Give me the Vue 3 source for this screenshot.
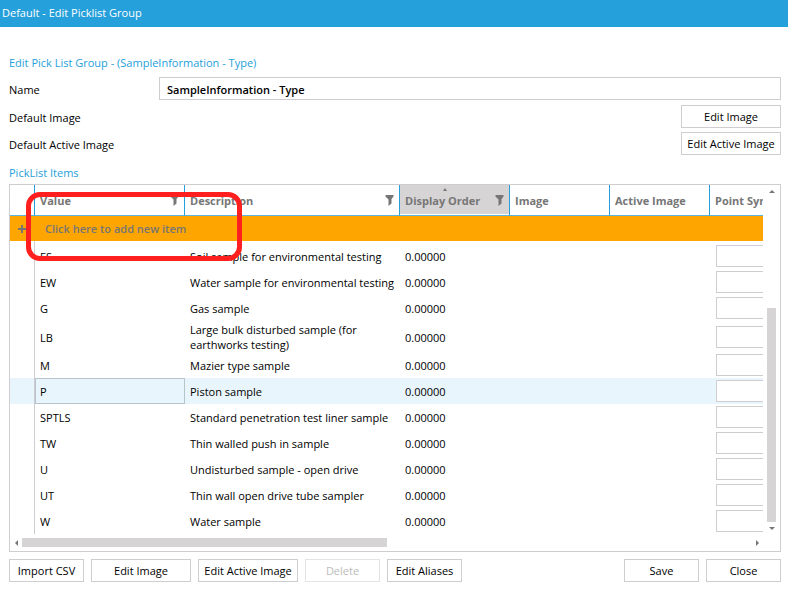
<script setup>
import { ref } from 'vue'

const name = ref('SampleInformation - Type')
const selected = ref('P')

const columns = [
  { key: 'value', label: 'Value', filter: true },
  { key: 'description', label: 'Description', filter: true },
  { key: 'order', label: 'Display Order', filter: true, sorted: true },
  { key: 'image', label: 'Image' },
  { key: 'active', label: 'Active Image' },
  { key: 'symbol', label: 'Point Symbol' },
]

const items = ref([
  { value: 'ES', description: 'Soil sample for environmental testing', order: '0.00000', symbol: '' },
  { value: 'EW', description: 'Water sample for environmental testing', order: '0.00000', symbol: '' },
  { value: 'G', description: 'Gas sample', order: '0.00000', symbol: '' },
  { value: 'LB', description: 'Large bulk disturbed sample (for earthworks testing)', order: '0.00000', symbol: '' },
  { value: 'M', description: 'Mazier type sample', order: '0.00000', symbol: '' },
  { value: 'P', description: 'Piston sample', order: '0.00000', symbol: '' },
  { value: 'SPTLS', description: 'Standard penetration test liner sample', order: '0.00000', symbol: '' },
  { value: 'TW', description: 'Thin walled push in sample', order: '0.00000', symbol: '' },
  { value: 'U', description: 'Undisturbed sample - open drive', order: '0.00000', symbol: '' },
  { value: 'UT', description: 'Thin wall open drive tube sampler', order: '0.00000', symbol: '' },
  { value: 'W', description: 'Water sample', order: '0.00000', symbol: '' },
])
</script>

<template>
  <div class="window">
    <header class="titlebar">Default - Edit Picklist Group</header>

    <main class="content">
      <h1 class="heading">Edit Pick List Group - (SampleInformation - Type)</h1>

      <div class="form">
        <div class="field">
          <label class="field-label" for="group-name">Name</label>
          <input id="group-name" v-model="name" class="name-input" type="text" />
        </div>
        <div class="field">
          <span class="field-label">Default Image</span>
          <button class="btn wide" type="button">Edit Image</button>
        </div>
        <div class="field">
          <span class="field-label">Default Active Image</span>
          <button class="btn wide" type="button">Edit Active Image</button>
        </div>
      </div>

      <h2 class="heading items-heading">PickList Items</h2>

      <section class="grid">
        <div class="viewport">
          <table class="table">
            <colgroup>
              <col class="col-marker" />
              <col class="col-value" />
              <col class="col-description" />
              <col class="col-order" />
              <col class="col-image" />
              <col class="col-image" />
              <col class="col-symbol" />
            </colgroup>
            <thead>
              <tr>
                <td class="corner"></td>
                <th v-for="c in columns" :key="c.key" scope="col" :class="{ sorted: c.sorted }">
                  <div class="head">
                    <span>{{ c.label }}</span>
                    <svg v-if="c.filter" class="funnel" viewBox="0 0 9 11" aria-hidden="true">
                      <path d="M0.500 0H8.500V1.500L6.500 4V8.500L3.500 11V4.500L0.500 1.500Z" />
                    </svg>
                  </div>
                  <svg v-if="c.sorted" class="sort" viewBox="0 0 4 3" aria-hidden="true">
                    <path d="M2 0L4 3H0Z" />
                  </svg>
                </th>
              </tr>
            </thead>
            <tbody>
              <tr class="new-row">
                <td class="plus">
                  <svg class="plus-icon" viewBox="0 0 8 8" aria-hidden="true">
                    <path d="M3 0H5V3H8V5H5V8H3V5H0V3H3Z" />
                  </svg>
                </td>
                <td colspan="6" class="new-text">Click here to add new item</td>
              </tr>
              <tr class="spacer"><td class="marker"></td><td colspan="6"></td></tr>
              <tr
                v-for="item in items"
                :key="item.value"
                class="row"
                :class="{ selected: item.value === selected }"
                @click="selected = item.value"
              >
                <td class="marker"></td>
                <td class="value">{{ item.value }}</td>
                <td>{{ item.description }}</td>
                <td>{{ item.order }}</td>
                <td></td>
                <td></td>
                <td class="symbol"><input v-model="item.symbol" class="symbol-input" type="text" :aria-label="'Point symbol for ' + item.value" /></td>
              </tr>
            </tbody>
          </table>
        </div>

        <div class="vbar">
          <svg class="arrow-v" viewBox="0 0 6 3" aria-hidden="true"><path d="M3 0L6 3H0Z" /></svg>
          <div class="vtrack"><div class="vthumb"></div></div>
          <svg class="arrow-v" viewBox="0 0 6 3" aria-hidden="true"><path d="M0 0H6L3 3Z" /></svg>
        </div>

        <div class="hbar">
          <svg class="arrow-h" viewBox="0 0 3 6" aria-hidden="true"><path d="M3 0V6L0 3Z" /></svg>
          <div class="htrack"><div class="hthumb"></div></div>
          <svg class="arrow-h" viewBox="0 0 3 6" aria-hidden="true"><path d="M0 0L3 3L0 6Z" /></svg>
        </div>

        <div class="highlight"></div>
      </section>

      <footer class="actions">
        <button class="btn" type="button">Import CSV</button>
        <button class="btn wide" type="button">Edit Image</button>
        <button class="btn wide" type="button">Edit Active Image</button>
        <button class="btn" type="button" disabled>Delete</button>
        <button class="btn" type="button">Edit Aliases</button>
        <span class="push"></span>
        <button class="btn" type="button">Save</button>
        <button class="btn" type="button">Close</button>
      </footer>
    </main>
  </div>
</template>

<style>
body {
  margin: 0;
  background: #fff;
}
</style>

<style scoped>
.window,
.window button,
.window input {
  font-family: "Open Sans", "Noto Sans", sans-serif;
  font-size: 11px;
  line-height: 15px;
  color: #000;
}
.window * {
  box-sizing: border-box;
}
.window .titlebar {
  height: 27px;
  padding: 5px 2px;
  background: #26a0da;
  color: #fff;
}
.content {
  padding: 28px 7px 10px 9px;
}
.heading {
  margin: 0;
  font-size: 11px;
  font-weight: 400;
  line-height: 15px;
  color: #26a0da;
}
.form {
  display: flex;
  flex-direction: column;
  gap: 4px;
  margin-top: 7px;
}
.field {
  display: flex;
  justify-content: space-between;
  align-items: center;
}
.field-label {
  flex: 0 0 150px;
  padding-top: 2px;
}
.name-input {
  flex: 1;
  min-width: 0;
  height: 23px;
  padding: 2px 7px 0;
  border: 1px solid #cfcdcf;
  font-weight: 600;
  outline: none;
}
.form .field:first-child {
  margin-bottom: 1px;
}
.btn {
  flex: none;
  width: 75px;
  height: 23px;
  padding: 0;
  border: 1px solid #cfcdcf;
  background: #fff;
  white-space: nowrap;
}
.btn.wide {
  width: 100px;
}
.window .btn:disabled {
  color: #bbb;
  border-color: #e4e4e4;
}
.items-heading {
  margin-top: 10px;
}
.grid {
  position: relative;
  display: grid;
  grid-template-columns: minmax(0, 1fr) 17px;
  grid-template-rows: auto 17px;
  margin-top: 4px;
  border: 1px solid #cfcdcf;
}
.viewport {
  overflow: hidden;
}
.table {
  width: 850px;
  table-layout: fixed;
  border-collapse: separate;
  border-spacing: 0;
}
.col-marker { width: 25px; }
.col-value { width: 150px; }
.col-description { width: 215px; }
.col-order { width: 110px; }
.col-image { width: 100px; }
.col-symbol { width: 150px; }
td,
th {
  padding: 0 5px;
  text-align: left;
  vertical-align: middle;
}
th,
.corner {
  position: relative;
  height: 31px;
  border-right: 1px solid #26a0da;
  border-bottom: 1px solid #5cb3dc;
  color: #767676;
  font-weight: 700;
  white-space: nowrap;
}
th.sorted {
  background: #d6d4d5;
  box-shadow: inset 0 -1px #fff;
}
.head {
  display: flex;
  justify-content: space-between;
  align-items: center;
}
.funnel {
  width: 9px;
  height: 11px;
  fill: #767676;
}
.sort {
  position: absolute;
  top: 3px;
  left: 43px;
  width: 4px;
  height: 3px;
  fill: #767676;
}
.new-row td {
  height: 25px;
  background: #ffa500;
  color: #767676;
  font-weight: 600;
}
.new-row .new-text {
  padding-left: 10px;
}
.new-row .plus {
  padding: 0 0 0 8px;
}
.plus-icon {
  display: block;
  width: 8px;
  height: 8px;
  fill: #767676;
}
.spacer td {
  height: 2px;
}
.row td {
  height: 26px;
  padding-top: 1px;
}
.row .symbol {
  padding-top: 0;
}
.marker {
  border-right: 1px solid #cfcdcf;
}
.selected td {
  background: #e9f5fc;
}
.row.selected .value {
  border: 1px solid #b9c4ca;
  padding: 1px 4px 0;
}
.symbol-input {
  display: block;
  width: 120px;
  height: 22px;
  margin-left: 1px;
  border: 1px solid #cfcdcf;
  background: #fff;
}
.vbar {
  display: flex;
  flex-direction: column;
  align-items: center;
  padding: 5px 4px 4px;
}
.vtrack {
  flex: 1;
  display: flex;
  align-items: flex-end;
  padding: 5px 0;
}
.vthumb {
  width: 9px;
  height: 66%;
  background: #d6d4d5;
}
.arrow-v {
  width: 6px;
  height: 3px;
  fill: #767676;
}
.hbar {
  display: flex;
  align-items: center;
  padding: 0 4px 0 5px;
}
.htrack {
  flex: 1;
  padding: 0 4px;
}
.hthumb {
  width: 50%;
  height: 9px;
  background: #d6d4d5;
}
.arrow-h {
  width: 3px;
  height: 6px;
  fill: #767676;
}
.highlight {
  position: absolute;
  top: 7px;
  left: 16px;
  width: 216px;
  height: 69px;
  border: 5px solid #ff1f1f;
  border-radius: 14px;
  pointer-events: none;
}
.actions {
  display: flex;
  gap: 7px;
  margin-top: 7px;
}
.push {
  flex: 1;
}
</style>
